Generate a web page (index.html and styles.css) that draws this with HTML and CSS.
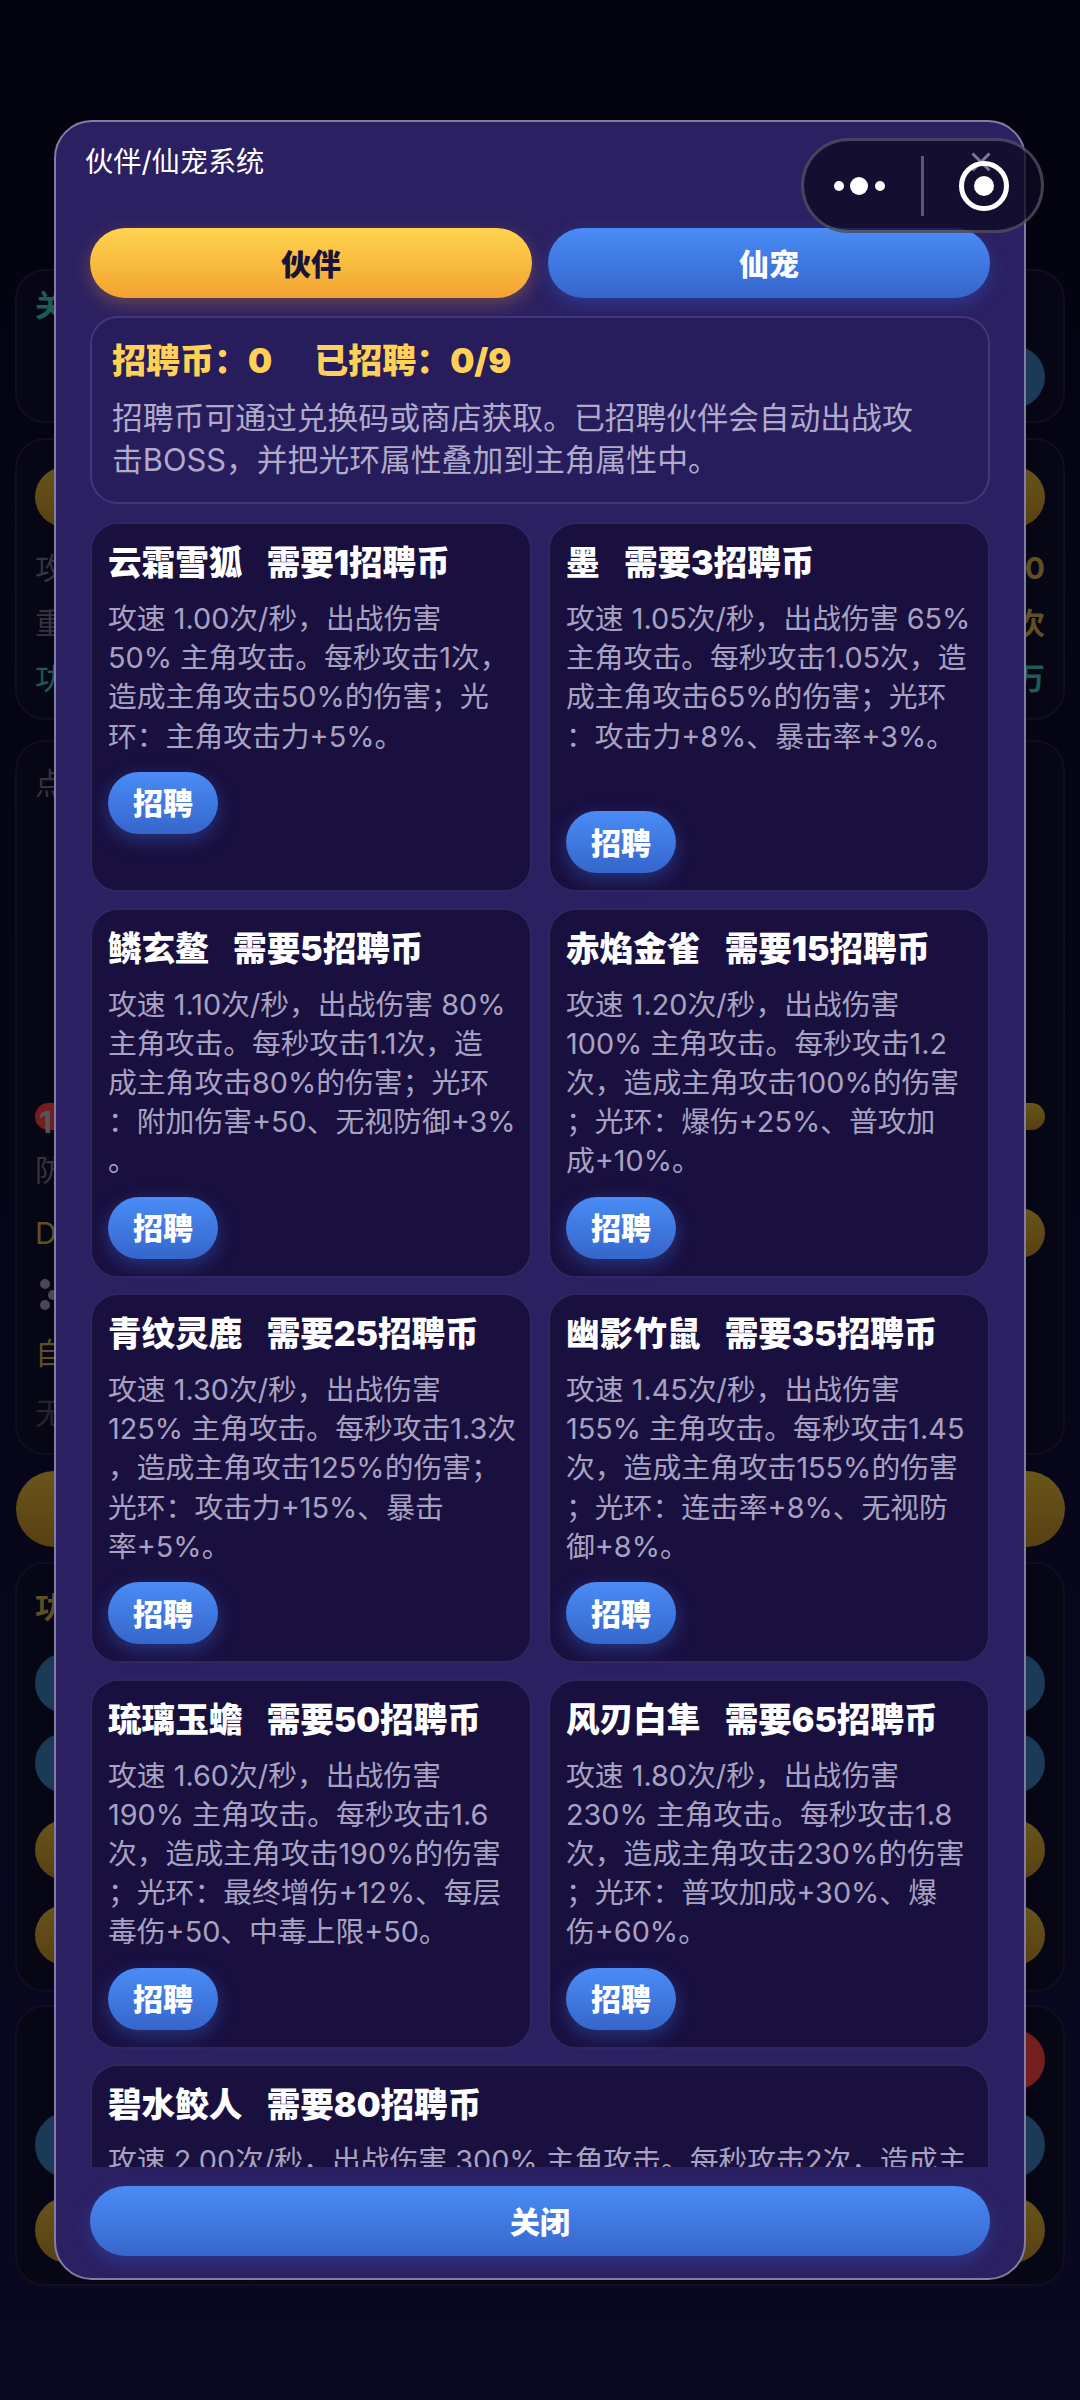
FILE: index.html
```html
<!DOCTYPE html>
<html lang="zh-CN">
<head>
<meta charset="utf-8">
<title>伙伴/仙宠系统</title>
<link rel="stylesheet" href="styles.css">
</head>
<body>
<div class="under">
  <section class="ucard ucard-a">
    <div class="utext teal bold">关</div>
    <div class="urow end top-a"><span class="upill blue h62"></span></div>
  </section>
  <section class="ucard ucard-b">
    <div class="upill gold h60"></div>
    <div class="urow row-b1"><span class="utext gray">攻</span><span class="utext gold-t bold">0</span></div>
    <div class="urow row-b"><span class="utext gray">重</span><span class="utext gold-t bold">次</span></div>
    <div class="urow row-b"><span class="utext teal">功</span><span class="utext teal bold">万</span></div>
  </section>
  <section class="ucard ucard-c">
    <div class="utext gray">点</div>
    <div class="urow row-c1"><span class="ubadge red"><b class="one">1</b></span><span class="ubadge gold"></span></div>
    <div class="urow row-c2"><span class="utext gray">防</span></div>
    <div class="urow row-c3"><span class="utext gold-t">D</span><span class="upill gold h50 short"></span></div>
    <div class="urow row-c4">
      <svg class="clover" viewBox="0 0 20 32"><g fill="#4a4858"><circle cx="6" cy="5" r="5"/><circle cx="6" cy="26" r="5"/><circle cx="14" cy="16" r="5"/></g></svg>
    </div>
    <div class="urow row-c5"><span class="utext gold-t">自</span></div>
    <div class="urow row-c6"><span class="utext dim">无</span></div>
  </section>
  <div class="bigpill"></div>
  <section class="ucard ucard-d">
    <div class="utext gold-t bold">功</div>
    <div class="upill blue h60 pill-d1"></div>
    <div class="upill blue h60 pill-d2"></div>
    <div class="upill gold h60 pill-d3"></div>
    <div class="upill gold h60 pill-d4"></div>
  </section>
  <section class="ucard ucard-e">
    <div class="urow end"><span class="upill red h60 short"></span></div>
    <div class="upill blue h66 pill-e2"></div>
    <div class="upill gold h66 pill-e3"></div>
  </section>
</div>

<div class="modal">
  <h1 class="modal-title">伙伴/仙宠系统</h1>
  <div class="tabs">
    <button class="btn tab tab-on">伙伴</button>
    <button class="btn tab tab-off">仙宠</button>
  </div>
  <div class="scroll">
    <div class="info">
      <div class="info-head"><span>招聘币：0</span><span>已招聘：0/9</span></div>
      <p class="info-desc">招聘币可通过兑换码或商店获取。已招聘伙伴会自动出战攻<br>击BOSS，并把光环属性叠加到主角属性中。</p>
    </div>
    <div class="grid">
      <article class="card">
        <h2 class="card-title">云霜雪狐&nbsp;&nbsp;需要1招聘币</h2>
        <p class="card-desc">攻速 1.00次/秒，出战伤害<br>50% 主角攻击。每秒攻击1次，<br>造成主角攻击50%的伤害；光<br>环：主角攻击力+5%。</p>
        <button class="btn hire">招聘</button>
      </article>
      <article class="card">
        <h2 class="card-title">墨&nbsp;&nbsp;需要3招聘币</h2>
        <p class="card-desc">攻速 1.05次/秒，出战伤害 65%<br>主角攻击。每秒攻击1.05次，造<br>成主角攻击65%的伤害；光环<br>：攻击力+8%、暴击率+3%。<br>&nbsp;</p>
        <button class="btn hire">招聘</button>
      </article>
      <article class="card">
        <h2 class="card-title">鳞玄鳌&nbsp;&nbsp;需要5招聘币</h2>
        <p class="card-desc">攻速 1.10次/秒，出战伤害 80%<br>主角攻击。每秒攻击1.1次，造<br>成主角攻击80%的伤害；光环<br>：附加伤害+50、无视防御+3%<br>。</p>
        <button class="btn hire">招聘</button>
      </article>
      <article class="card">
        <h2 class="card-title">赤焰金雀&nbsp;&nbsp;需要15招聘币</h2>
        <p class="card-desc">攻速 1.20次/秒，出战伤害<br>100% 主角攻击。每秒攻击1.2<br>次，造成主角攻击100%的伤害<br>；光环：爆伤+25%、普攻加<br>成+10%。</p>
        <button class="btn hire">招聘</button>
      </article>
      <article class="card">
        <h2 class="card-title">青纹灵鹿&nbsp;&nbsp;需要25招聘币</h2>
        <p class="card-desc">攻速 1.30次/秒，出战伤害<br>125% 主角攻击。每秒攻击1.3次<br>，造成主角攻击125%的伤害；<br>光环：攻击力+15%、暴击<br>率+5%。</p>
        <button class="btn hire">招聘</button>
      </article>
      <article class="card">
        <h2 class="card-title">幽影竹鼠&nbsp;&nbsp;需要35招聘币</h2>
        <p class="card-desc">攻速 1.45次/秒，出战伤害<br>155% 主角攻击。每秒攻击1.45<br>次，造成主角攻击155%的伤害<br>；光环：连击率+8%、无视防<br>御+8%。</p>
        <button class="btn hire">招聘</button>
      </article>
      <article class="card">
        <h2 class="card-title">琉璃玉蟾&nbsp;&nbsp;需要50招聘币</h2>
        <p class="card-desc">攻速 1.60次/秒，出战伤害<br>190% 主角攻击。每秒攻击1.6<br>次，造成主角攻击190%的伤害<br>；光环：最终增伤+12%、每层<br>毒伤+50、中毒上限+50。</p>
        <button class="btn hire">招聘</button>
      </article>
      <article class="card">
        <h2 class="card-title">风刃白隼&nbsp;&nbsp;需要65招聘币</h2>
        <p class="card-desc">攻速 1.80次/秒，出战伤害<br>230% 主角攻击。每秒攻击1.8<br>次，造成主角攻击230%的伤害<br>；光环：普攻加成+30%、爆<br>伤+60%。</p>
        <button class="btn hire">招聘</button>
      </article>
      <article class="card card-wide">
        <h2 class="card-title">碧水鲛人&nbsp;&nbsp;需要80招聘币</h2>
        <p class="card-desc">攻速 2.00次/秒，出战伤害 300% 主角攻击。每秒攻击2次，造成主</p>
      </article>
    </div>
  </div>
  <button class="btn close">关闭</button>
</div>

<div class="capsule">
  <div class="cap-side">
    <svg class="cap-dots" viewBox="0 0 52 20"><circle cx="5" cy="10" r="5"/><circle cx="25" cy="10" r="9"/><circle cx="46" cy="10" r="5"/></svg>
  </div>
  <span class="cap-line"></span>
  <div class="cap-side">
    <svg class="cap-ring" viewBox="0 0 60 72">
      <path class="cap-x" d="M18.5 3.5l17 17M35.500 3.500l-17 17"/>
      <circle class="ring" cx="30" cy="36" r="22.500"/>
      <circle class="ring-dot" cx="30" cy="36" r="10"/>
    </svg>
  </div>
</div>
</body>
</html>
```
FILE: styles.css
```css
* { box-sizing: border-box; }
html, body { margin: 0; padding: 0; }
body {
  width: 1080px;
  height: 2400px;
  overflow: hidden;
  position: relative;
  background: linear-gradient(180deg, #03030f 0%, #060517 50%, #0a0820 100%);
  font-family: Inter, "Noto Sans CJK SC", sans-serif;
  color: #fff;
}

/* dimmed page behind the dialog */
.under { padding: 269px 15px 0; display: flex; flex-direction: column; }
.ucard {
  border: 2px solid #0f0e22;
  border-radius: 30px;
  background: #070615;
  padding: 0 18px;
  flex: none;
}
.ucard-a { height: 154px; padding-top: 14px; }
.ucard-b { height: 282px; margin-top: 15px; padding-top: 27px; }
.ucard-c { height: 715px; margin-top: 20px; padding-top: 21px; }
.ucard-d { height: 430px; margin-top: 15px; padding-top: 23px; }
.ucard-e { height: 281px; margin-top: 13px; padding-top: 23px; }
.urow { display: flex; justify-content: space-between; align-items: center; }
.end { justify-content: flex-end; }
.top-a { margin-top: 21px; }
.utext { font-size: 30px; line-height: 40px; display: block; }
.bold { font-weight: 700; }
.teal { color: #1d5a58; }
.gray { color: #35333f; }
.dim { color: #26242f; }
.gold-t { color: #5f4f22; }
.upill { display: block; border-radius: 40px; width: 100%; }
.short { width: 200px; }
.top-a .upill { width: 200px; }
.blue { background: #1a3a58; }
.gold { background: linear-gradient(180deg, #67541c, #584011); }
.red { background: #741e1e; }
.h50 { height: 50px; }
.h60 { height: 60px; }
.h62 { height: 62px; }
.h66 { height: 66px; }
.row-b1 { height: 55px; margin-top: 13px; }
.row-b { height: 55px; }
.row-c1 { height: 27px; margin-top: 300px; }
.ubadge { display: block; height: 27px; width: 90px; border-radius: 14px; position: relative; }
.one { position: absolute; left: 4px; top: 4px; font-size: 30px; line-height: 30px; color: #55535c; }
.row-c2 { height: 40px; margin-top: 20px; }
.row-c3 { height: 50px; margin-top: 18px; }
.row-c4 { height: 32px; margin-top: 21px; }
.clover { width: 20px; height: 32px; margin-left: 4px; display: block; }
.row-c5 { height: 40px; margin-top: 22px; }
.row-c6 { height: 40px; margin-top: 20px; }
.bigpill {
  height: 76px;
  margin: 16px 0 0 1px;
  border-radius: 38px;
  background: linear-gradient(180deg, #6a561b, #584011);
}
.pill-d1 { margin-top: 26px; }
.pill-d2 { margin-top: 20px; }
.pill-d3 { margin-top: 27px; }
.pill-d4 { margin-top: 25px; }
.pill-e2 { margin-top: 22px; }
.pill-e3 { margin-top: 19px; }

/* dialog */
.modal {
  position: absolute;
  left: 54px;
  top: 120px;
  width: 972px;
  height: 2160px;
  border: 2px solid #837da4;
  border-radius: 38px;
  background: #2b2062;
  display: flex;
  flex-direction: column;
  padding: 0 34px 22px;
  overflow: hidden;
}
.modal-title {
  margin: 18px 0 0 -5px;
  height: 44px;
  font-size: 28.200px;
  line-height: 44px;
  font-weight: 400;
  color: #fff;
}
.btn {
  display: block;
  border: 0;
  padding: 0 0 3px;
  font-family: inherit;
  font-weight: 900;
  color: #fff;
  text-align: center;
}
.tabs { display: flex; gap: 16px; margin-top: 44px; flex: none; }
.tab {
  flex: 1;
  height: 70px;
  border-radius: 35px;
  font-size: 30px;
}
.tab-on {
  background: linear-gradient(180deg, #ffd44e, #f3a332);
  color: #1b1238;
  box-shadow: 0 6px 18px rgba(255, 170, 50, .28);
}
.tab-off {
  background: linear-gradient(180deg, #4a8cf6, #3566cb);
  box-shadow: 0 6px 18px rgba(60, 120, 240, .28);
}
.scroll { flex: 1; min-height: 0; overflow: hidden; margin-top: 18px; }
.info {
  border: 2px solid #41367c;
  border-radius: 28px;
  background: #281d5c;
  padding: 20px 20px 20px;
  height: 188px;
}
.info-head {
  display: flex;
  gap: 42px;
  font-size: 34px;
  line-height: 46px;
  font-weight: 900;
  color: #ffd257;
}
.info-desc {
  margin: 13px 0 0;
  font-size: 30.800px;
  line-height: 41.500px;
  color: #b1abcb;
}
.grid {
  display: grid;
  grid-template-columns: minmax(0, 1fr) minmax(0, 1fr);
  column-gap: 16px;
  row-gap: 15.500px;
  margin-top: 18px;
}
.card {
  border: 2px solid #30265f;
  border-radius: 28px;
  background: #1a1040;
  padding: 16px 16px 17px;
  display: flex;
  flex-direction: column;
  align-items: flex-start;
}
.card-wide { grid-column: 1 / -1; }
.card-title {
  margin: 0;
  font-size: 33.600px;
  line-height: 46px;
  font-weight: 900;
  word-spacing: 5.500px;
  color: #fff;
  white-space: nowrap;
}
.card-desc {
  margin: 13px 0 0;
  font-size: 28.800px;
  line-height: 39.200px;
  color: #a8a2c2;
  white-space: nowrap;
}
.hire {
  margin-top: 16px;
  width: 110px;
  height: 62px;
  border-radius: 31px;
  font-size: 30px;
  background: linear-gradient(180deg, #4a8cf6, #3566cb);
  box-shadow: 0 6px 18px rgba(60, 120, 240, .35);
}
.close {
  flex: none;
  margin-top: 19px;
  height: 70px;
  border-radius: 35px;
  font-size: 30px;
  background: linear-gradient(180deg, #4a8cf6, #3566cb);
  box-shadow: 0 6px 18px rgba(60, 120, 240, .28);
}

/* mini-program capsule */
.capsule {
  position: absolute;
  left: 801px;
  top: 138px;
  width: 243px;
  height: 95px;
  border: 3px solid rgba(255, 255, 255, .22);
  border-radius: 48px;
  background: rgba(14, 10, 34, .78);
  display: flex;
  align-items: center;
}
.cap-side { flex: 1; display: flex; justify-content: center; align-items: center; }
.cap-line { width: 3px; height: 60px; background: rgba(255, 255, 255, .3); flex: none; }
.cap-dots { width: 52px; height: 20px; display: block; fill: #fff; margin-left: -6px; }
.cap-ring { width: 60px; height: 72px; display: block; margin-left: 2px; }
.cap-x { stroke: #7d7895; stroke-width: 3; fill: none; }
.ring { fill: none; stroke: #fff; stroke-width: 5; }
.ring-dot { fill: #fff; }
```
